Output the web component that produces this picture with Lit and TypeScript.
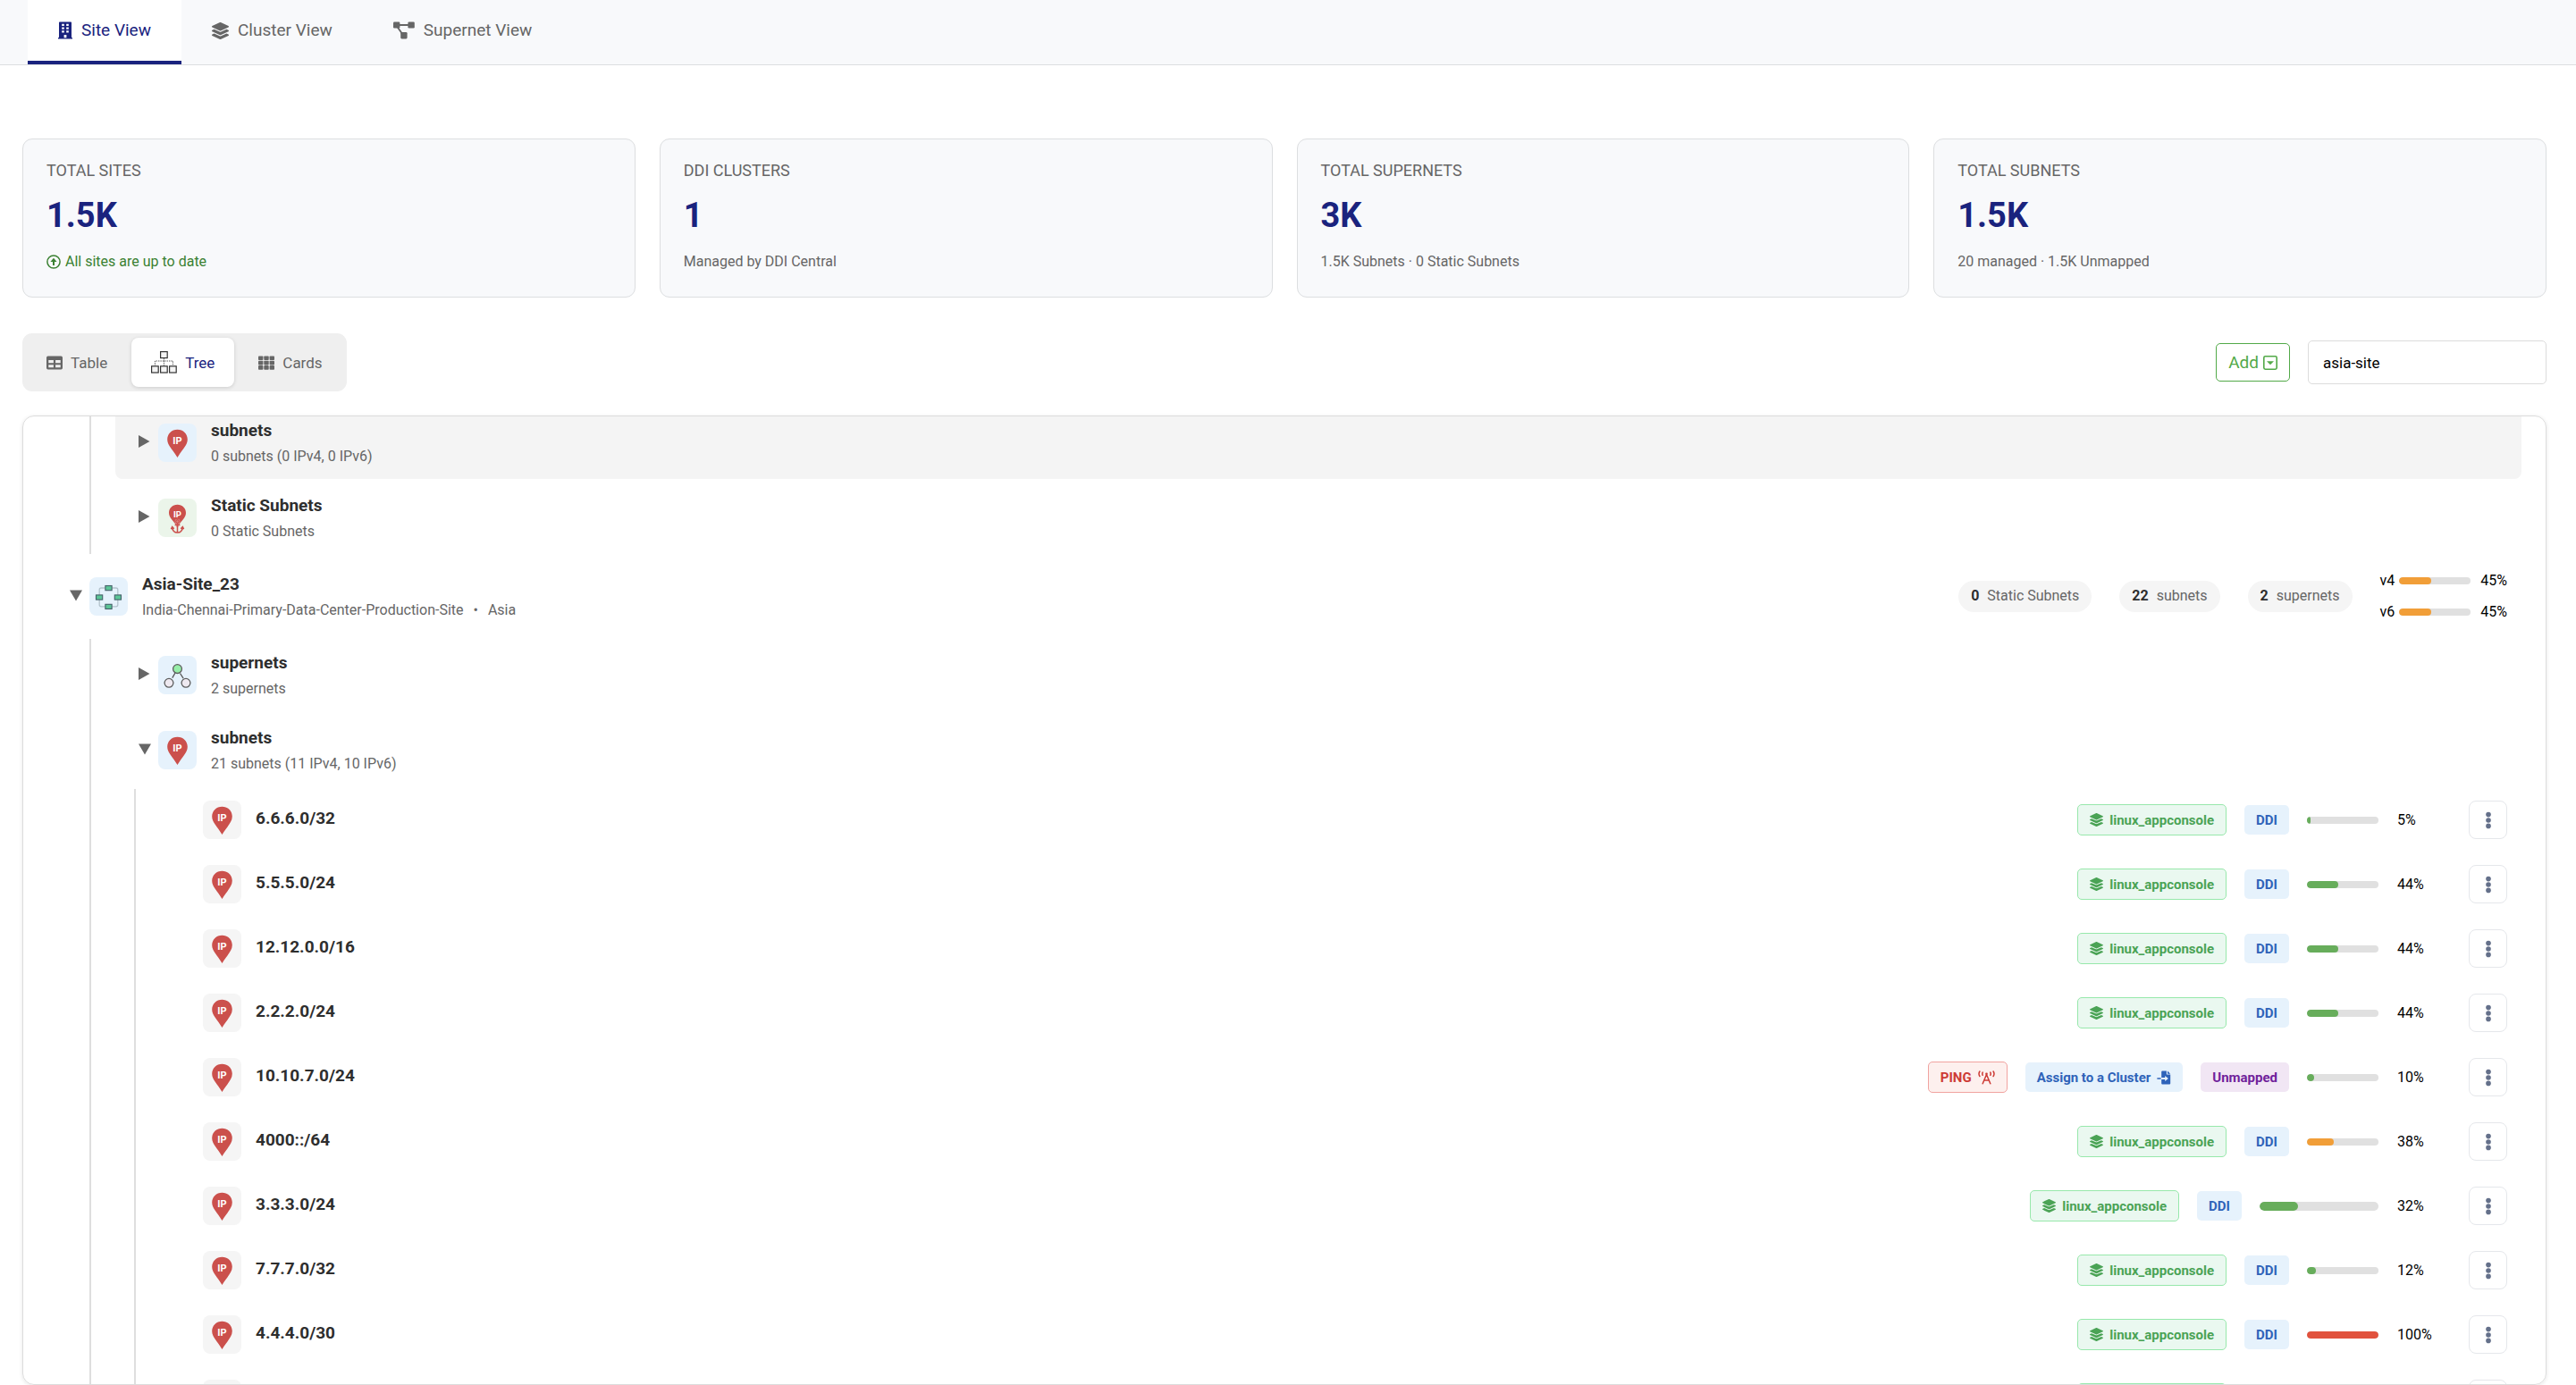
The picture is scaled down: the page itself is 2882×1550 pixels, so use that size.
import { LitElement, html, css, svg, nothing } from "lit";
import type { TemplateResult } from "lit";
import { customElement, property, state } from "lit/decorators.js";
import { classMap } from "lit/directives/class-map.js";
import { styleMap } from "lit/directives/style-map.js";

type Tone = "green" | "orange" | "red";

interface Leaf {
  name: string;
  percent: number;
  tone: Tone;
  wide?: boolean;
  unmapped?: boolean;
}

const LEAVES: Leaf[] = [
  { name: "6.6.6.0/32", percent: 5, tone: "green" },
  { name: "5.5.5.0/24", percent: 44, tone: "green" },
  { name: "12.12.0.0/16", percent: 44, tone: "green" },
  { name: "2.2.2.0/24", percent: 44, tone: "green" },
  { name: "10.10.7.0/24", percent: 10, tone: "green", unmapped: true },
  { name: "4000::/64", percent: 38, tone: "orange" },
  { name: "3.3.3.0/24", percent: 32, tone: "green", wide: true },
  { name: "7.7.7.0/32", percent: 12, tone: "green" },
  { name: "4.4.4.0/30", percent: 100, tone: "red" },
  { name: "", percent: 0, tone: "green" },
];

const STATS = [
  { label: "TOTAL SITES", value: "1.5K", note: "All sites are up to date", ok: true },
  { label: "DDI CLUSTERS", value: "1", note: "Managed by DDI Central", ok: false },
  { label: "TOTAL SUPERNETS", value: "3K", note: "1.5K Subnets · 0 Static Subnets", ok: false },
  { label: "TOTAL SUBNETS", value: "1.5K", note: "20 managed · 1.5K Unmapped", ok: false },
];

const icon = (w: number, h: number, body: TemplateResult | unknown, box = `0 0 ${w} ${h}`) =>
  html`<svg class="icon" width=${w} height=${h} viewBox=${box} fill="currentColor" aria-hidden="true">${body}</svg>`;

const layers = (size: number) =>
  icon(
    size,
    size,
    svg`<path d="M12.41 148.02l232.94 105.67c6.8 3.09 14.49 3.09 21.29 0l232.94-105.67c16.55-7.51 16.55-32.52 0-40.03L266.65 2.31a25.607 25.607 0 0 0-21.29 0L12.41 107.98c-16.55 7.51-16.55 32.53 0 40.04zm487.18 88.28l-58.09-26.33-161.64 73.27c-7.56 3.43-15.59 5.17-23.86 5.17s-16.29-1.74-23.86-5.17L70.51 209.97l-58.1 26.33c-16.55 7.5-16.55 32.5 0 40l232.94 105.59c6.8 3.08 14.49 3.08 21.29 0L499.59 276.3c16.55-7.5 16.55-32.5 0-40zm0 127.8l-57.87-26.23-161.86 73.37c-7.56 3.43-15.59 5.17-23.86 5.17s-16.29-1.74-23.86-5.17L70.29 337.87 12.41 364.1c-16.55 7.5-16.55 32.5 0 40l232.94 105.59c6.8 3.08 14.49 3.08 21.29 0L499.59 404.1c16.55-7.5 16.55-32.5 0-40z"/>`,
    "0 0 512 512",
  );

const building = icon(
  16,
  20,
  svg`<path fill-rule="evenodd" d="M1.8 .4h12.4q.8 0 .8.8v16.9h.5q.5 0 .5.5v.9H0v-.9q0-.5.5-.5H1V1.200q0-.8.8-.8zM4.200 2.800v2.200h2.600v-2.200zM9.200 2.800v2.200h2.600v-2.200zM4.200 6.500v2.200h2.600V6.500zM9.200 6.500v2.200h2.600V6.500zM4.200 10.200v2.200h2.600v-2.200zM9.200 10.200v2.200h2.600v-2.200zM6.600 15v3.200h2.800V15z"/>`,
);

const diagram = icon(
  24,
  20,
  svg`<rect x="0" y="0.500" width="7.400" height="7" rx="1.300"/><rect x="16.400" y="0.500" width="7.400" height="7" rx="1.300"/><rect x="8.200" y="12" width="7.400" height="7.400" rx="1.300"/><path d="M7 4h10M4.800 6.500l5 7" stroke="currentColor" stroke-width="1.900" fill="none"/>`,
);

const circleUp = icon(
  16,
  16,
  svg`<circle cx="8" cy="8" r="7.100" fill="none" stroke="currentColor" stroke-width="1.500"/><path d="M8 3.800l3.600 4.200H9v4H7V8H4.400z"/>`,
);

const tableIcon = icon(
  18,
  16,
  svg`<path fill-rule="evenodd" d="M1.700.5h14.600q1.700 0 1.700 1.700v11.600q0 1.700-1.700 1.700H1.700Q0 15.500 0 13.800V2.200Q0 .5 1.700.5zM2.300 5v3.200h5.600V5zM10.100 5v3.200h5.600V5zM2.300 10.200v3.100h5.600v-3.100zM10.100 10.200v3.100h5.600v-3.100z"/>`,
);

const gridIcon = icon(
  18,
  16,
  svg`${[0, 6.3, 12.6].map((x) => [0.5, 5.8, 11.1].map((y) => svg`<rect x=${x} y=${y} width="5.400" height="4.600" rx=".8"/>`))}`,
);

const treeIcon = icon(
  29,
  25,
  svg`<g fill="#f4f4f4" stroke="#333" stroke-width="1.200"><rect x="10.600" y=".6" width="7.600" height="7"/><rect x=".6" y="16.800" width="7.600" height="7.200"/><rect x="10.600" y="16.800" width="7.600" height="7.200"/><rect x="20.600" y="16.800" width="7.600" height="7.200"/></g><path d="M14.400 8v9M4.400 17v-6h20v6" fill="none" stroke="#555" stroke-width="1" stroke-dasharray="1.400 1"/>`,
);

const caretBox = icon(
  16,
  16,
  svg`<rect x=".8" y=".8" width="14.400" height="14.400" rx="1.600" fill="none" stroke="currentColor" stroke-width="1.600"/><path d="M4 6.300h8l-4 4z"/>`,
);

const antenna = icon(
  19,
  16,
  svg`<g fill="none" stroke="currentColor" stroke-width="1.500" stroke-linecap="round"><path d="M9.500 4.500L5.200 14.800M9.500 4.500l4.300 10.300M6.700 11h5.600"/><path d="M1.900 1Q.1 3.700 1.900 6.500M17.100 1q1.800 2.700 0 5.500M5.200 2.100q-.8 1.600 0 3.200M13.800 2.100q.8 1.600 0 3.200"/></g><circle cx="9.500" cy="3.800" r="1.300"/>`,
);

const fileImport = icon(
  16,
  16,
  svg`<path d="M5.200.5h5.700v4h4.300v10q0 1-1 1h-8q-1 0-1-1v-4.600h4v2.200l3.700-3.100-3.700-3.100v2.200h-4V1.500q0-1 1-1z"/><path d="M12 .5l3.200 3.200H12zM.4 8.300h4.200v1.500H.4z"/>`,
);

const pin = svg`<path d="M21.500 6.800c-6.500 0-11.300 4.800-11.300 11 0 6.800 6.200 11.400 11.300 20.300 5.100-8.900 11.300-13.500 11.300-20.300 0-6.200-4.800-11-11.300-11z" fill="#cb504c"/><text class="pin-text" x="21.500" y="23" font-size="11">IP</text>`;

const pinAnchor = svg`<path d="M21.500 6.700c-5.500 0-9.500 4-9.500 9.200 0 5.300 5 8.600 9.500 15.600 4.500-7 9.500-10.300 9.500-15.600 0-5.200-4-9.200-9.500-9.200z" fill="#cb504c"/><text class="pin-text" x="21.500" y="20.500" font-size="9.500">IP</text><g fill="none" stroke="#e9a9a3" stroke-width="2.400"><circle cx="21.500" cy="25.500" r="1.600"/><path d="M21.500 27v5"/></g><g fill="none" stroke="#cb504c" stroke-width="1.500"><circle cx="21.500" cy="25.500" r="1.700"/><path d="M21.500 27.200v10.600M18.600 29.500h5.800M15.600 32.300q.6 5.400 5.900 5.800 5.300-.4 5.900-5.800M14.400 34.200l1.300-2.700 2 2.200M28.600 34.200l-1.300-2.700-2 2.200"/></g>`;

const siteGlyph = svg`<rect x="11.200" y="12" width="20.600" height="20.800" rx="2" fill="none" stroke="#b4c3cd" stroke-width="1.300"/><g fill="#5cc596" stroke="#45616a" stroke-width="1.100"><rect x="17.900" y="9.500" width="7.200" height="5.200"/><rect x="7.500" y="19.900" width="7.200" height="5.200"/><rect x="28.300" y="19.900" width="7.200" height="5.200"/><rect x="17.900" y="30.300" width="7.200" height="5.200"/></g>`;

const supernetGlyph = svg`<path d="M19 19l-3.200 5.600M24.500 19.500l3.600 5.600" stroke="#555" stroke-width="1.300" fill="none"/><g stroke="#5d5d5d" stroke-width="1.300"><circle cx="21.500" cy="14.600" r="4.900" fill="#96eea8"/><circle cx="12" cy="30.300" r="4.900" fill="#eee9f0"/><circle cx="31" cy="30.300" r="4.900" fill="#eee9f0"/></g>`;

const base = css`
  *,
  *::before,
  *::after {
    box-sizing: border-box;
  }
  button,
  input {
    font: inherit;
    color: inherit;
    margin: 0;
  }
  button {
    cursor: pointer;
  }
  .icon {
    display: block;
    flex: none;
  }
`;

@customElement("usage-bar")
export class UsageBar extends LitElement {
  @property({ type: Number }) percent = 0;
  @property() tone: Tone = "green";
  @property({ type: Boolean, reflect: true }) wide = false;

  static styles = css`
    :host {
      display: block;
      flex: none;
      width: 80px;
      height: 8px;
    }
    :host([wide]) {
      width: 133px;
      height: 10px;
    }
    .track {
      height: 100%;
      border-radius: 5px;
      background: #e0e0e0;
      overflow: hidden;
    }
    .fill {
      height: 100%;
      border-radius: 5px;
    }
    .green {
      background: #67ad5b;
    }
    .orange {
      background: #f19e38;
    }
    .red {
      background: #e1523d;
    }
  `;

  render() {
    return html`<div class="track" role="progressbar" aria-label="Utilisation" aria-valuenow=${this.percent}>
      <div class="fill ${this.tone}" style=${styleMap({ width: `${this.percent}%` })}></div>
    </div>`;
  }
}

@customElement("app-root")
export class AppRoot extends LitElement {
  @state() private tab = "Site View";
  @state() private view = "Tree";

  static styles = [
    base,
    css`
      :host {
        display: flex;
        flex-direction: column;
        height: 100vh;
        overflow: hidden;
        background: #fff;
        color: #666;
        font-family: Roboto, "Liberation Sans", sans-serif;
        font-size: 17px;
        line-height: 24px;
      }
      .tabs {
        display: flex;
        flex: none;
        padding-left: 31px;
        background: #f8f9fb;
        border-bottom: 1px solid #dcdee0;
      }
      .tab {
        display: flex;
        align-items: center;
        gap: 10px;
        height: 72px;
        padding: 0 34px;
        border: 0;
        border-bottom: 4px solid transparent;
        background: none;
        font-size: 19px;
      }
      .tab.active {
        background: #fff;
        border-bottom-color: #1a237e;
        color: #1a237e;
      }
      .page {
        display: flex;
        flex-direction: column;
        flex: 1;
        min-height: 0;
        padding: 82px 33px 0 25px;
      }
      .stats {
        display: grid;
        grid-template-columns: repeat(4, 1fr);
        gap: 27px;
      }
      .stat {
        display: flex;
        flex-direction: column;
        gap: 17px;
        padding: 25px 26px 27px;
        border: 1px solid #dcdee0;
        border-radius: 11px;
        background: #f8f9fb;
      }
      .stat-label {
        font-size: 18px;
        line-height: 20px;
      }
      .stat-value {
        font-size: 38px;
        font-weight: 700;
        line-height: 46px;
        color: #1a237e;
      }
      .stat-note {
        display: flex;
        align-items: center;
        gap: 5px;
        font-size: 16px;
        line-height: 24px;
      }
      .stat-note.ok {
        color: #3b8132;
      }
      .toolbar {
        display: flex;
        align-items: center;
        justify-content: space-between;
        margin: 40px 0 27px;
      }
      .segments {
        display: flex;
        gap: 5px;
        padding: 5px;
        border-radius: 11px;
        background: #efefef;
      }
      .segment {
        display: flex;
        align-items: center;
        gap: 9px;
        height: 55px;
        padding: 0 22px;
        border: 0;
        border-radius: 8px;
        background: none;
      }
      .segment.active {
        background: #fff;
        color: #1a237e;
        box-shadow: 0 1px 4px rgba(0, 0, 0, 0.15);
      }
      .tools {
        display: flex;
        align-items: center;
        gap: 20px;
      }
      .add {
        display: flex;
        align-items: center;
        gap: 5px;
        height: 43px;
        padding: 0 13px;
        border: 1px solid #52a948;
        border-radius: 5px;
        background: #fff;
        color: #52a948;
        font-size: 19px;
      }
      .search {
        width: 267px;
        height: 49px;
        padding: 0 16px;
        border: 1px solid #dcdcdc;
        border-radius: 5px;
        background: #fff;
        color: #000;
        outline: 0;
      }
      .panel {
        flex: 1;
        min-height: 0;
        overflow: auto;
        scrollbar-width: none;
        padding: 0 27px 0 26px;
        border: 1px solid #dcdcdc;
        border-radius: 13px;
        box-shadow: 0 1px 4px rgba(0, 0, 0, 0.1);
      }
      ul {
        list-style: none;
        margin: 0;
        padding: 0;
      }
      .tree {
        display: flow-root;
        margin-top: -11px;
      }
      .branch {
        margin-left: 48px;
        border-left: 2px solid #dedede;
        padding-left: 27px;
      }
      .branch .branch {
        margin-left: 21px;
      }
      .row {
        display: flex;
        align-items: center;
        height: 69px;
        margin-bottom: 3px;
        padding: 0 16px 0 26px;
        border-radius: 8px;
      }
      .row.group {
        height: 81px;
      }
      .row.site {
        height: 89px;
      }
      .row.hover {
        background: #f4f4f4;
      }
      .toggle {
        display: flex;
        align-items: center;
        flex: none;
        width: 22px;
        height: 22px;
        padding: 0 0 4px;
        border: 0;
        background: none;
      }
      .glyph {
        flex: none;
        width: 43px;
        height: 43px;
        margin-right: 16px;
        border-radius: 8px;
        background: #e6f2fc;
      }
      .glyph.mint {
        background: #ebf5ea;
      }
      .glyph.plain {
        background: #f5f5f5;
      }
      .pin-text {
        fill: #fff;
        font-weight: 700;
        text-anchor: middle;
      }
      .label {
        flex: 1;
        min-width: 0;
      }
      .name {
        margin-bottom: 4px;
        font-size: 19px;
        font-weight: 700;
        line-height: 25px;
        color: #2e2e2e;
      }
      .desc {
        display: flex;
        gap: 11px;
        font-size: 16px;
        line-height: 25px;
      }
      .counts {
        display: flex;
        align-items: center;
        gap: 31px;
        font-size: 16px;
      }
      .count {
        display: flex;
        gap: 9px;
        padding: 5px 14px 6px;
        border-radius: 18px;
        background: #f5f5f5;
      }
      .count b {
        color: #2e2e2e;
      }
      .families {
        display: flex;
        flex-direction: column;
        gap: 11px;
        color: #000;
      }
      .family {
        display: flex;
        align-items: center;
        gap: 5px;
      }
      .family .share {
        margin-left: 6px;
      }
      .facts {
        display: flex;
        align-items: center;
        gap: 20px;
      }
      .badge {
        display: flex;
        align-items: center;
        gap: 7px;
        height: 33px;
        padding: 0 13px;
        border: 0;
        border-radius: 5px;
        background: #e6f2fc;
        color: #2f63b9;
        font-size: 15px;
        font-weight: 700;
        text-decoration: none;
      }
      .badge.cluster {
        height: 35px;
        border: 1px solid #97e8ab;
        background: #eaf8f0;
        color: #4aa355;
      }
      .badge.ping {
        height: 35px;
        border: 1px solid #f1a3a0;
        background: #fdf0ee;
        color: #cd3b35;
      }
      .badge.unmapped {
        background: #f1e6f4;
        color: #70229b;
      }
      .percent {
        width: 61px;
        padding-left: 1px;
        color: #000;
        font-size: 16px;
      }
      .menu {
        display: grid;
        place-items: center;
        width: 43px;
        height: 43px;
        padding: 0;
        border: 1px solid #e5e7eb;
        border-radius: 8px;
        background: #fff;
        color: #64708a;
      }
    `,
  ];

  private toggle(open: boolean, name: string) {
    return html`<button class="toggle" aria-expanded=${open} aria-label="Toggle ${name}">
      ${icon(14, 14, open ? svg`<path d="M0 1.500h14L7 13.500z"/>` : svg`<path d="M0 0l12.500 7L0 14z"/>`)}
    </button>`;
  }

  private glyph(body: unknown, tone = "") {
    return html`<svg class="glyph ${tone}" viewBox="0 0 43 43" aria-hidden="true">${body}</svg>`;
  }

  private group(name: string, desc: string, body: unknown, open = false, tone = "", hover = false) {
    return html`<div class=${classMap({ row: true, group: true, hover })}>
      ${this.toggle(open, name)}${this.glyph(body, tone)}
      <div class="label">
        <div class="name">${name}</div>
        <div class="desc">${desc}</div>
      </div>
    </div>`;
  }

  private leaf(item: Leaf) {
    return html`<li class="row">
      <span class="toggle"></span>${this.glyph(pin, "plain")}
      <div class="label"><div class="name">${item.name}</div></div>
      <div class="facts">
        ${item.unmapped
          ? html`<button class="badge ping">PING ${antenna}</button>
              <button class="badge">Assign to a Cluster ${fileImport}</button>
              <span class="badge unmapped">Unmapped</span>`
          : html`<a class="badge cluster" href="#cluster">${layers(15)} linux_appconsole</a>
              <span class="badge">DDI</span>`}
        <usage-bar .percent=${item.percent} .tone=${item.tone} ?wide=${item.wide ?? false}></usage-bar>
        <span class="percent">${item.name ? `${item.percent}%` : nothing}</span>
        <button class="menu" aria-label="Actions">
          ${icon(6, 20, svg`<circle cx="3" cy="3.600" r="2.800"/><circle cx="3" cy="10" r="2.800"/><circle cx="3" cy="16.400" r="2.800"/>`)}
        </button>
      </div>
    </li>`;
  }

  render() {
    const tabs: [string, unknown][] = [
      ["Site View", building],
      ["Cluster View", layers(19)],
      ["Supernet View", diagram],
    ];
    const views: [string, unknown][] = [
      ["Table", tableIcon],
      ["Tree", treeIcon],
      ["Cards", gridIcon],
    ];
    const counts: [string, string][] = [
      ["0", "Static Subnets"],
      ["22", "subnets"],
      ["2", "supernets"],
    ];
    return html`
      <nav class="tabs">
        ${tabs.map(
          ([name, glyph]) => html`<button
            class=${classMap({ tab: true, active: this.tab === name })}
            @click=${() => (this.tab = name)}
          >
            ${glyph}<span>${name}</span>
          </button>`,
        )}
      </nav>
      <main class="page">
        <section class="stats">
          ${STATS.map(
            (s) => html`<article class="stat">
              <div class="stat-label">${s.label}</div>
              <div class="stat-value">${s.value}</div>
              <div class=${classMap({ "stat-note": true, ok: s.ok })}>${s.ok ? circleUp : nothing}<span>${s.note}</span></div>
            </article>`,
          )}
        </section>
        <div class="toolbar">
          <div class="segments">
            ${views.map(
              ([name, glyph]) => html`<button
                class=${classMap({ segment: true, active: this.view === name })}
                @click=${() => (this.view = name)}
              >
                ${glyph}<span>${name}</span>
              </button>`,
            )}
          </div>
          <div class="tools">
            <button class="add">Add ${caretBox}</button>
            <input class="search" type="text" aria-label="Search sites" value="asia-site" />
          </div>
        </div>
        <section class="panel">
          <ul class="tree">
            <li>
              <ul class="branch">
                <li>${this.group("subnets", "0 subnets (0 IPv4, 0 IPv6)", pin, false, "", true)}</li>
                <li>${this.group("Static Subnets", "0 Static Subnets", pinAnchor, false, "mint")}</li>
              </ul>
            </li>
            <li>
              <div class="row site">
                ${this.toggle(true, "Asia-Site_23")}${this.glyph(siteGlyph)}
                <div class="label">
                  <div class="name">Asia-Site_23</div>
                  <div class="desc">
                    <span>India-Chennai-Primary-Data-Center-Production-Site</span><span>•</span><span>Asia</span>
                  </div>
                </div>
                <div class="counts">
                  ${counts.map(([n, what]) => html`<span class="count"><b>${n}</b><span>${what}</span></span>`)}
                  <div class="families">
                    ${["v4", "v6"].map(
                      (v) => html`<div class="family">
                        <span>${v}</span><usage-bar .percent=${45} .tone=${"orange"}></usage-bar><span class="share">45%</span>
                      </div>`,
                    )}
                  </div>
                </div>
              </div>
              <ul class="branch">
                <li>${this.group("supernets", "2 supernets", supernetGlyph)}</li>
                <li>
                  ${this.group("subnets", "21 subnets (11 IPv4, 10 IPv6)", pin, true)}
                  <ul class="branch">
                    ${LEAVES.map((l) => this.leaf(l))}
                  </ul>
                </li>
              </ul>
            </li>
          </ul>
        </section>
      </main>
    `;
  }
}
